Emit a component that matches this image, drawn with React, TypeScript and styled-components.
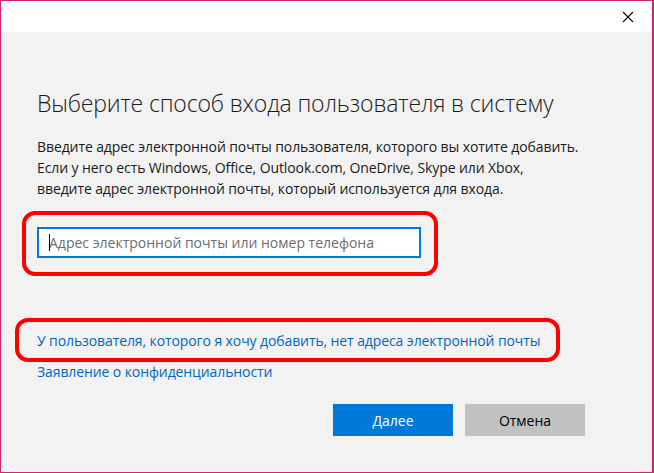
import React from 'react';
import styled, { createGlobalStyle } from 'styled-components';

const GlobalStyle = createGlobalStyle`
  html, body {
    margin: 0;
    padding: 0;
    background: #ffffff;
  }
  * {
    box-sizing: border-box;
  }
`;

const Window = styled.div`
  width: 654px;
  height: 473px;
  border: 1px solid #cf2470;
  border-right-width: 2px;
  display: flex;
  flex-direction: column;
  font-family: 'Open Sans', 'Noto Sans', sans-serif;
  overflow: hidden;
`;

const TitleBar = styled.div`
  height: 31px;
  background: #ffffff;
  display: flex;
  justify-content: flex-end;
  align-items: center;
  padding-right: 18px;
`;

const CloseButton = styled.div`
  width: 12px;
  height: 12px;
  display: flex;
  svg {
    display: block;
  }
`;

const Content = styled.div`
  flex: 1;
  background: #f2f2f2;
  padding: 56px 36px 0 36px;
  display: flex;
  flex-direction: column;
`;

const Heading = styled.h1`
  margin: 0;
  font-size: 23px;
  font-weight: 300;
  line-height: 30px;
  color: #1a1a1a;
  letter-spacing: -0.15px;
`;

const Description = styled.p`
  margin: 18px 0 0 0;
  font-size: 14px;
  line-height: 21px;
  color: #1a1a1a;
  letter-spacing: -0.1px;
`;

const Highlight = styled.div<{ $shiftLeft: number; $width: number }>`
  border: 4px solid #ff0000;
  border-radius: 13px;
  margin-left: -${(p) => p.$shiftLeft}px;
  width: ${(p) => p.$width}px;
  padding-left: ${(p) => p.$shiftLeft - 4}px;
`;

const FieldHighlight = styled(Highlight)`
  margin-top: 12px;
  padding-top: 12px;
  padding-bottom: 14px;
`;

const LinkHighlight = styled(Highlight)`
  margin-top: 42px;
  padding-top: 10px;
  padding-bottom: 8px;
`;

const Field = styled.div`
  width: 384px;
  height: 31px;
  border: 2px solid #0078d7;
  background: #ffffff;
  display: flex;
  align-items: center;
  padding-left: 10px;
  position: relative;
`;

const Caret = styled.span`
  position: absolute;
  left: 10px;
  top: 5px;
  width: 1px;
  height: 17px;
  background: #000000;
`;

const Placeholder = styled.span`
  font-size: 14px;
  color: #6d6d6d;
`;

const Link = styled.a`
  display: block;
  font-size: 14px;
  line-height: 18px;
  color: #0067c0;
  text-decoration: none;
  letter-spacing: -0.1px;
  cursor: pointer;
`;

const PrivacyLink = styled(Link)`
  margin-top: 1px;
`;

const ButtonRow = styled.div`
  display: flex;
  justify-content: flex-end;
  gap: 12px;
  margin-top: 23px;
  padding-right: 31px;
`;

const Button = styled.button<{ $primary?: boolean }>`
  width: 120px;
  height: 32px;
  border: none;
  font-family: inherit;
  font-size: 14px;
  color: ${(p) => (p.$primary ? '#ffffff' : '#000000')};
  background: ${(p) => (p.$primary ? '#0078d7' : '#c2c2c2')};
  cursor: pointer;
`;

const App = () => {
  return (
    <>
      <GlobalStyle />
      <Window>
        <TitleBar>
          <CloseButton>
            <svg width="12" height="12" viewBox="0 0 12 12">
              <path d="M1 1 L11 11 M11 1 L1 11" stroke="#000" strokeWidth="1.1" fill="none" />
            </svg>
          </CloseButton>
        </TitleBar>
        <Content>
          <Heading>Выберите способ входа пользователя в систему</Heading>
          <Description>
            Введите адрес электронной почты пользователя, которого вы хотите добавить.
            <br />
            Если у него есть Windows, Office, Outlook.com, OneDrive, Skype или Xbox,
            <br />
            введите адрес электронной почты, который используется для входа.
          </Description>
          <FieldHighlight $shiftLeft={15} $width={416}>
            <Field>
              <Caret />
              <Placeholder>Адрес электронной почты или номер телефона</Placeholder>
            </Field>
          </FieldHighlight>
          <LinkHighlight $shiftLeft={22} $width={545}>
            <Link>У пользователя, которого я хочу добавить, нет адреса электронной почты</Link>
          </LinkHighlight>
          <PrivacyLink>Заявление о конфиденциальности</PrivacyLink>
          <ButtonRow>
            <Button $primary>Далее</Button>
            <Button>Отмена</Button>
          </ButtonRow>
        </Content>
      </Window>
    </>
  );
};

export default App;
